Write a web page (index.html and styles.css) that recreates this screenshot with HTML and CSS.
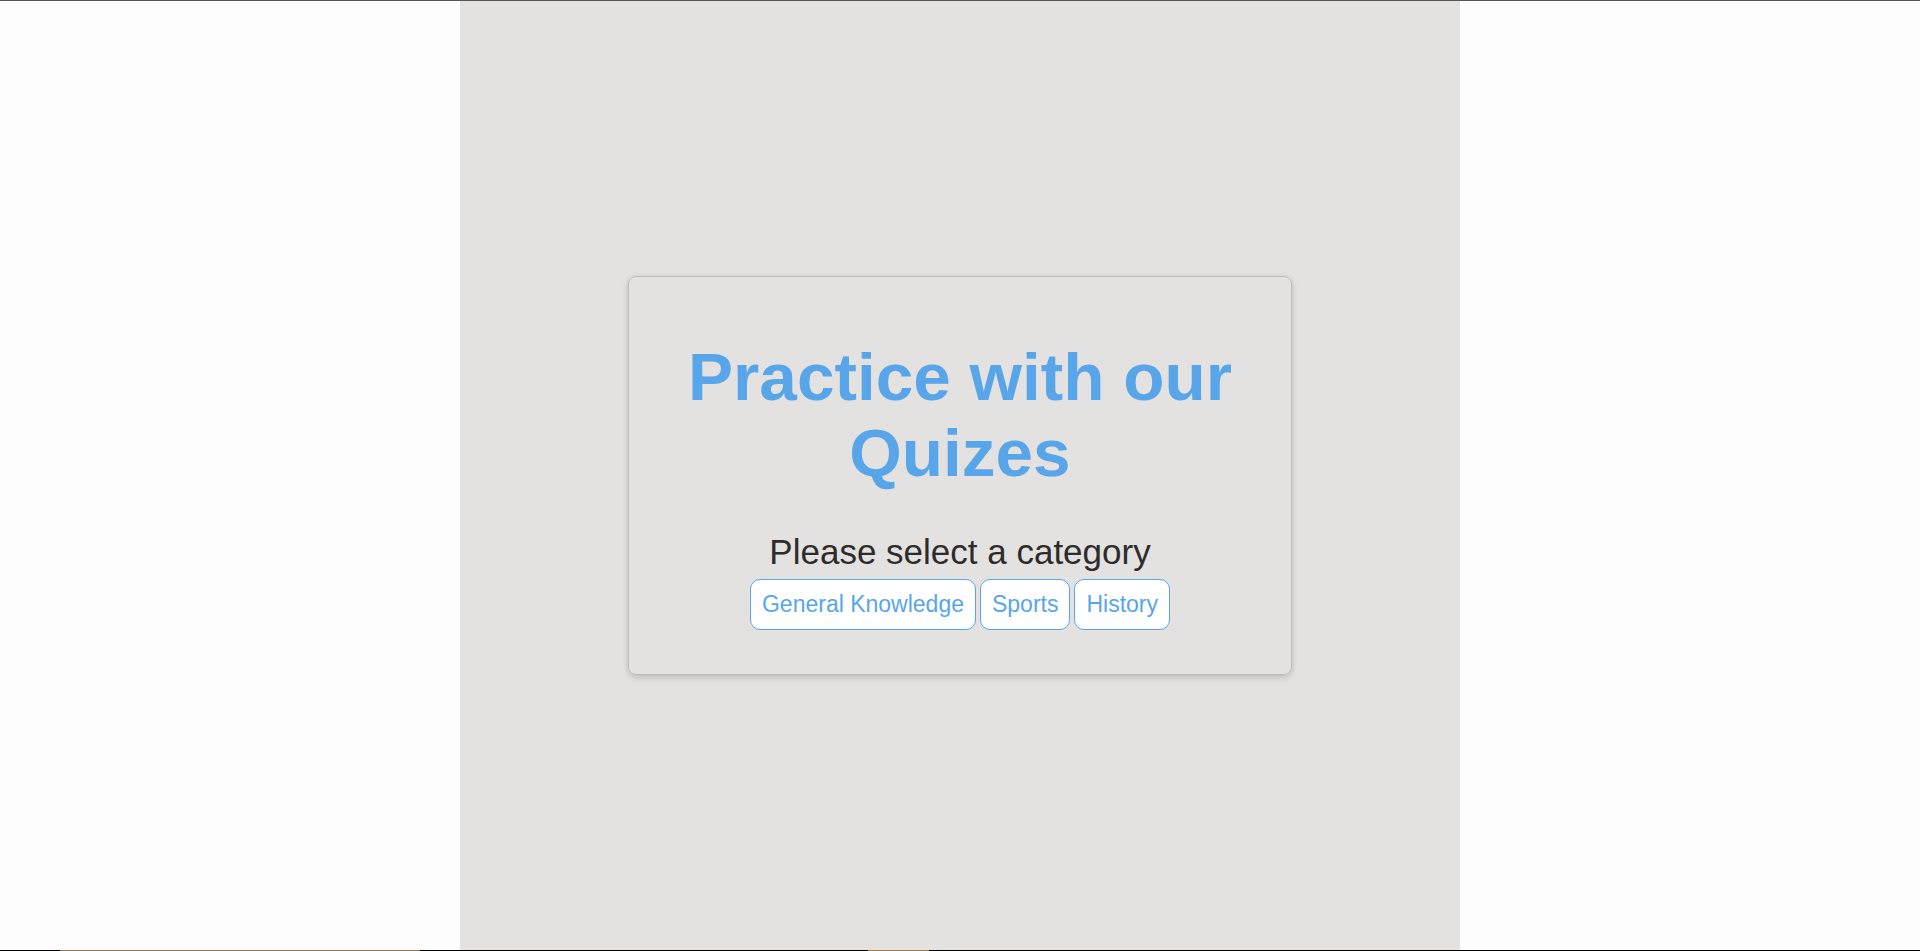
FILE: index.html
```html
<!DOCTYPE html>
<html lang="en">
<head>
<meta charset="utf-8">
<title>Quizes</title>
<link rel="stylesheet" href="styles.css">
</head>
<body>
<div class="top-line"></div>
<main class="panel">
  <section class="card">
    <h1 class="title">Practice with our Quizes</h1>
    <p class="subtitle">Please select a category</p>
    <div class="categories"><button class="cat">General Knowledge</button> <button class="cat">Sports</button> <button class="cat">History</button></div>
  </section>
</main>
<div class="bottom-line"><span class="seg seg-a"></span><span class="seg seg-b"></span></div>
</body>
</html>
```
FILE: styles.css
```css
html, body {
  margin: 0;
  padding: 0;
}
body {
  background: #fdfdfd;
  font-family: "Liberation Sans", Arial, sans-serif;
  height: 951px;
  overflow: hidden;
  display: flex;
  flex-direction: column;
}
.top-line {
  height: 1px;
  background: #555555;
  flex: none;
}
.panel {
  flex: 1;
  width: 1000px;
  margin: 0 auto;
  background: #e3e2e0;
  display: flex;
  align-items: center;
  justify-content: center;
}
.card {
  width: 664px;
  box-sizing: border-box;
  border: 1px solid #bdbcbb;
  border-radius: 8px;
  box-shadow: 0 2px 6px rgba(0, 0, 0, 0.18);
  padding: 40px 30px 44px;
  text-align: center;
}
.title {
  margin: 22px 0 42px;
  font-size: 67.5px;
  font-weight: 700;
  color: #58a6e9;
  line-height: 1.12;
}
.subtitle {
  margin: 0 0 6px;
  font-size: 35px;
  color: #2e2c2b;
  line-height: 1.15;
}
.categories {
  font-size: 0;
}
.cat {
  font-family: "Liberation Sans", Arial, sans-serif;
  font-size: 23px;
  line-height: 25px;
  color: #58a6e9;
  background: #ffffff;
  border: 1px solid #58a6e9;
  border-radius: 10px;
  padding: 12px 11px;
  margin: 0 2px;
  cursor: pointer;
}
.bottom-line {
  height: 1px;
  background: #000000;
  flex: none;
  display: flex;
}
.seg {
  display: block;
  height: 1px;
  background: #8c7a52;
}
.seg-a {
  margin-left: 60px;
  width: 360px;
}
.seg-b {
  margin-left: 448px;
  width: 61px;
  background: #a07c3c;
}
```
